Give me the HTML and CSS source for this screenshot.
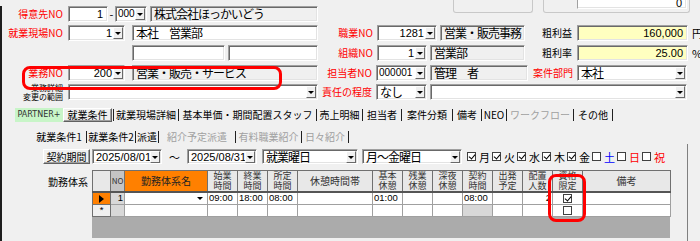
FILE: index.html
```html
<!DOCTYPE html>
<html lang="ja">
<head>
<meta charset="utf-8">
<link rel="stylesheet" href="styles.css">
</head>
<body>
<div class="page">
  <div class="upper">
    <div class="row r1">
      <span class="lbl la red">得意先NO</span>
      <div class="tb w40 ml5 right num">1</div>
      <span class="dash">-</span>
      <div class="cb w32 tight"><span class="v num sm">000</span><span class="dd"></span></div>
      <div class="tb ro w168 ml3">株式会社ほっかいどう</div>
      <div class="grp ga"></div>
      <div class="grp gb"><div class="tb gt right num">0</div></div>
    </div>
    <div class="row r2">
      <span class="lbl la red">就業現場NO</span>
      <div class="cb w57 ml5"><span class="v right num">1</span><span class="dd"></span></div>
      <div class="tb w186 ml7">本社　営業部</div>
      <span class="lbl lb red">職業NO</span>
      <div class="cb w60 ml4"><span class="v right num">1281</span><span class="dd"></span></div>
      <div class="tb ro w85 ml3">営業・販売事務</div>
      <span class="lbl lc">粗利益</span>
      <div class="tb yel w111 ml5 right num">160,000</div>
      <span class="unit">円</span>
    </div>
    <div class="row r3">
      <div class="tb w93 ml132"></div>
      <div class="tb w90 ml3"></div>
      <span class="lbl lb red">組織NO</span>
      <div class="cb w50 ml4"><span class="v right num">1</span><span class="dd"></span></div>
      <div class="tb ro w95 ml3">営業部</div>
      <span class="lbl lc">粗利率</span>
      <div class="tb yel w111 ml5 right num">25.00</div>
      <span class="unit">%</span>
    </div>
    <div class="row r4">
      <span class="lbl la red">業務NO</span>
      <div class="cb w57 ml5"><span class="v right num">200</span><span class="dd"></span></div>
      <div class="tb ro w186 ml7">営業・販売・サービス</div>
      <span class="lbl lb2 red">担当者NO</span>
      <div class="cb w51 ml4 tight"><span class="v num sm">000001</span><span class="dd"></span></div>
      <div class="tb ro w98 ml3">管理　者</div>
      <span class="lbl lc2 red">案件部門</span>
      <div class="cb w110 ml4"><span class="v">本社</span><span class="dd"></span></div>
    </div>
    <div class="row r5">
      <span class="lbl la small">業務詳細<br>変更の範囲</span>
      <div class="cb w250 ml5"><span class="v"></span><span class="dd"></span></div>
      <span class="lbl lb2 red">責任の程度</span>
      <div class="cb w51 ml4"><span class="v">なし</span><span class="dd"></span></div>
      <div class="cb w257 ml3"><span class="v"></span><span class="dd"></span></div>
    </div>
  </div>

  <div class="tabs">
    <span class="partner">PARTNER+</span>
    <span class="tab sel t-a">就業条件</span><span class="sep"></span>
    <span class="tab t-b">就業現場詳細</span><span class="sep"></span>
    <span class="tab t-c">基本単価・期間配置スタッフ</span><span class="sep"></span>
    <span class="tab t-d">売上明細</span><span class="sep"></span>
    <span class="tab t-e">担当者</span><span class="sep"></span>
    <span class="tab t-f">案件分類</span><span class="sep"></span>
    <span class="tab t-g">備考</span><span class="sep"></span>
    <span class="tab t-h">NEO</span><span class="sep"></span>
    <span class="tab t-i dis">ワークフロー</span><span class="sep"></span>
    <span class="tab t-j">その他</span><span class="sep"></span>
  </div>

  <div class="panel">
    <div class="subtabs">
      <span class="tab s-a">就業条件1</span><span class="sep"></span>
      <span class="tab s-b">就業条件2</span><span class="sep"></span>
      <span class="tab s-c">派遣</span><span class="sep"></span>
      <span class="tab s-d dis">紹介予定派遣</span><span class="sep"></span>
      <span class="tab s-e dis">有料職業紹介</span><span class="sep"></span>
      <span class="tab s-f dis">日々紹介</span><span class="sep"></span>
    </div>
    <div class="subpanel">
      <div class="row period">
        <span class="btn">契約期間</span>
        <div class="cb w70 ml2"><span class="v num">2025/08/01</span><span class="dd"></span></div>
        <span class="tilde">～</span>
        <div class="cb w70"><span class="v num">2025/08/31</span><span class="dd"></span></div>
        <div class="cb w96 ml5"><span class="v">就業曜日</span><span class="dd"></span></div>
        <div class="cb w100 ml4"><span class="v">月～金曜日</span><span class="dd"></span></div>
        <div class="days">
          <span class="day"><span class="chk on"></span>月</span>
          <span class="day"><span class="chk on"></span>火</span>
          <span class="day"><span class="chk on"></span>水</span>
          <span class="day"><span class="chk on"></span>木</span>
          <span class="day"><span class="chk on"></span>金</span>
          <span class="day blue"><span class="chk"></span>土</span>
          <span class="day red"><span class="chk"></span>日</span>
          <span class="day red"><span class="chk"></span>祝</span>
        </div>
      </div>
      <div class="gridrow">
        <span class="glabel">勤務体系</span>
        <div class="grid">
          <table>
            <colgroup>
              <col class="c-rh"><col class="c-no"><col class="c-name"><col class="c30"><col class="c30"><col class="c30"><col class="c75"><col class="c30"><col class="c30"><col class="c30"><col class="c30"><col class="c30"><col class="c30"><col class="c30"><col class="c-note">
            </colgroup>
            <thead>
              <tr>
                <th class="rh"></th>
                <th class="hno">NO</th>
                <th class="orange">勤務体系名</th>
                <th>始業<br>時間</th>
                <th>終業<br>時間</th>
                <th>所定<br>時間</th>
                <th class="one">休憩時間帯</th>
                <th>基本<br>休憩</th>
                <th>残業<br>休憩</th>
                <th>深夜<br>休憩</th>
                <th>契約<br>時間</th>
                <th>出発<br>予定</th>
                <th>配置<br>人数</th>
                <th>資格<br>限定</th>
                <th class="one">備考</th>
              </tr>
            </thead>
            <tbody>
              <tr>
                <td class="rh cur"><span class="tri"></span></td>
                <td class="gray right">1</td>
                <td class="namecell"><span class="cellarrow"></span></td>
                <td>09:00</td>
                <td>18:00</td>
                <td>08:00</td>
                <td></td>
                <td>01:00</td>
                <td></td>
                <td></td>
                <td>08:00</td>
                <td></td>
                <td class="right">2</td>
                <td class="center"><span class="gchk on"></span></td>
                <td></td>
              </tr>
              <tr>
                <td class="rh star">*</td>
                <td class="gray"></td>
                <td></td>
                <td></td>
                <td></td>
                <td></td>
                <td></td>
                <td></td>
                <td></td>
                <td></td>
                <td class="gray"></td>
                <td></td>
                <td></td>
                <td class="center"><span class="gchk"></span></td>
                <td></td>
              </tr>
            </tbody>
          </table>
        </div>
      </div>
    </div>
  </div>

  <div class="hl hl1"></div>
  <div class="hl hl2"></div>
</div>
</body>
</html>
```

FILE: styles.css
```css
* { box-sizing: border-box; }
body {
  margin: 0;
  width: 700px;
  height: 241px;
  overflow: hidden;
  background: #f0f0f0;
  font-family: "Noto Sans CJK JP", "Noto Sans CJK SC", sans-serif;
  font-size: 12px;
  color: #000;
}
.page {
  position: relative;
  width: 700px;
  height: 241px;
  border-left: 2px solid #1e1e1e;
  border-bottom: 2px solid #1e1e1e;
}
.upper { margin-left: -2px; }
.row { display: flex; align-items: center; height: 16px; }
.r1 { margin-top: 6px; }
.r2 { margin-top: 3px; }
.r3 { margin-top: 4px; }
.r4 { margin-top: 4px; }
.r5 { margin-top: 3px; }

.lbl { font-size: 10px; line-height: 12px; white-space: nowrap; text-align: right; flex: none; }
.red { color: #ff0000; }
.la { width: 63px; }
.lb { width: 55px; }
.lb2 { width: 54px; }
.lc { width: 47px; }
.lc2 { width: 45px; }
.small { font-size: 8px; line-height: 9px; }

.tb, .cb {
  height: 16px;
  background: #fff;
  border: 1px solid;
  border-color: #a0a0a0 #fff #fff #a0a0a0;
  box-shadow: inset 1px 1px 0 #696969, inset -1px -1px 0 #e3e3e3;
  font-size: 12px;
  line-height: 14px;
  letter-spacing: -1px;
  padding: 0 3px;
  white-space: nowrap;
  overflow: hidden;
  flex: none;
}
.tb.ro { background: #f0f0f0; }
.tb.yel { background: #ffffc0; }
.num { font-family: "Liberation Sans", sans-serif; font-size: 11px; letter-spacing: 0; }
.num.sm { font-size: 10px; }
.tb.num { padding-right: 4px; }
.right { text-align: right; }
.cb { display: flex; align-items: center; padding: 0 1px 0 3px; }
.cb.tight { padding-left: 2px; }
.cb .v { flex: 1; overflow: hidden; white-space: nowrap; }
.cb .v.right { text-align: right; padding-right: 1px; }
.dd {
  flex: none;
  width: 10px;
  height: 12px;
  background: #f0f0f0;
  border: 1px solid;
  border-color: #fff #696969 #696969 #fff;
  position: relative;
}
.dd::after {
  content: "";
  position: absolute;
  left: 1px;
  top: 4px;
  border-left: 3px solid transparent;
  border-right: 3px solid transparent;
  border-top: 3px solid #000;
}
.dash { width: 7px; text-align: center; font-size: 11px; flex: none; }
.unit { font-size: 11px; margin-left: 4px; }

.w32 { width: 32px; } .w40 { width: 40px; } .w50 { width: 50px; } .w51 { width: 51px; }
.w57 { width: 57px; } .w60 { width: 60px; } .w70 { width: 70px; } .w85 { width: 85px; }
.w90 { width: 90px; } .w93 { width: 93px; } .w95 { width: 95px; } .w96 { width: 96px; }
.w98 { width: 98px; } .w100 { width: 100px; } .w110 { width: 110px; } .w111 { width: 111px; }
.w168 { width: 168px; } .w186 { width: 186px; } .w250 { width: 250px; } .w257 { width: 257px; }
.ml2 { margin-left: 2px; } .ml3 { margin-left: 3px; } .ml4 { margin-left: 4px; } .ml5 { margin-left: 5px; }
.ml7 { margin-left: 7px; } .ml132 { margin-left: 132px; }

/* partial group boxes at the top */
.grp {
  align-self: flex-start;
  margin-top: -6px;
  height: 13px;
  border: 1px solid #c8c8c8;
  border-top: none;
  border-radius: 0 0 3px 3px;
  flex: none;
}
.ga { width: 80px; margin-left: 135px; }
.gb { width: 147px; margin-left: 10px; display: flex; justify-content: flex-end; padding-right: 2px; }
.gt { width: 110px; height: 9px; border-top: none; line-height: 6px; padding-right: 6px; box-shadow: inset -1px -1px 0 #e3e3e3; }

/* main tabs */
.tabs { display: flex; align-items: center; height: 14px; margin-top: 8px; margin-left: 13px; font-size: 10px; }
.tab { text-align: center; white-space: nowrap; line-height: 12px; flex: none; }
.sep { width: 1px; height: 12px; background: #202020; flex: none; }
.partner {
  width: 48px; height: 14px; background: #c8f5c8; font-size: 8px; line-height: 14px;
  text-align: center; font-family: "DejaVu Sans", sans-serif; color: #333; flex: none;
}
.sel {
  height: 14px; line-height: 12px;
  border: 1px solid; border-color: #fff #606060 #606060 #fff;
  box-shadow: inset -1px -1px 0 #a0a0a0;
}
.dis { color: #a0a0a0; }
.t-a { width: 49px; margin-right: 1px; }
.t-b { width: 64px; }
.t-c { width: 137px; }
.t-d { width: 45px; }
.t-e { width: 38px; }
.t-f { width: 50px; }
.t-g { width: 28px; }
.t-h { width: 24px; }
.t-i { width: 66px; }
.t-j { width: 38px; }

.panel { margin-left: -2px; }
.subtabs { display: flex; align-items: center; height: 14px; margin-top: 8px; margin-left: 32px; font-size: 10px; }
.s-a { width: 54px; }
.s-b { width: 48px; }
.s-c { width: 22px; }
.s-d { width: 76px; }
.s-e { width: 65px; }
.s-f { width: 46px; }

.subpanel { width: 688px; border-right: 1px solid #808080; padding-top: 5px; height: 100px; }
.period { height: 15px; }
.period .cb { height: 15px; }
.btn {
  margin-left: 43px; width: 47px; height: 15px; font-size: 10px; line-height: 13px; text-align: center; flex: none;
  border: 1px solid; border-color: #fff #606060 #606060 #fff; box-shadow: inset -1px -1px 0 #a0a0a0;
}
.tilde { width: 25px; text-align: center; font-size: 11px; flex: none; }
.days { display: flex; margin-left: 5px; }
.day { display: flex; align-items: center; width: 25px; font-size: 11px; line-height: 12px; }
.day.blue { color: #0000ff; }
.day.red { color: #ff0000; }
.chk {
  width: 9px; height: 9px; background: #fff; border: 1px solid #404040; margin-right: 3px; position: relative; flex: none;
}
.chk.on::after, .gchk.on::after {
  content: ""; position: absolute; left: 2px; top: 0; width: 3px; height: 5px;
  border: solid #000; border-width: 0 1.5px 1.5px 0; transform: rotate(40deg);
}

.gridrow { display: flex; margin-top: 6px; }
.glabel { width: 92px; padding-left: 48px; font-size: 10px; line-height: 12px; padding-top: 6px; flex: none; }
.grid { width: 578px; height: 68px; background: #ababab; flex: none; }
table { border-collapse: collapse; table-layout: fixed; width: 578px; }
.c-rh { width: 18px; } .c-no { width: 14px; } .c-name { width: 83px; } .c30 { width: 30px; } .c75 { width: 75px; } .c-note { width: 88px; }
th {
  height: 21px; padding: 0; font-weight: normal; font-size: 9px; line-height: 10px; color: #333;
  background: #e8e8e8; border: 1px solid #707070; border-bottom: 2px solid #555;
}
th.one { font-size: 10px; }
th.hno { background: #c4c4c4; font-size: 8px; }
th.orange { background: #ff8000; color: #222; font-size: 10px; }
td {
  height: 12px; padding: 0 1px; font-size: 9.5px; line-height: 10px; background: #fff;
  border: 1px solid #a0a0a0; font-family: "Liberation Sans", sans-serif; white-space: nowrap; overflow: hidden;
}
td.gray { background: #d8d8d8; }
td.right { text-align: right; }
td.center { text-align: center; }
td.rh { background: #f0f0f0; text-align: center; border-color: #707070; }
td.cur { background: #ff8000; }
.tri { display: inline-block; border-left: 5px solid #000; border-top: 4px solid transparent; border-bottom: 4px solid transparent; vertical-align: middle; }
.namecell { position: relative; }
.cellarrow { position: absolute; right: 4px; top: 4px; border-left: 3px solid transparent; border-right: 3px solid transparent; border-top: 3px solid #000; }
.gchk { display: inline-block; width: 9px; height: 9px; border: 1px solid #404040; background: #fff; position: relative; vertical-align: middle; }

.hl { position: absolute; border: 3px solid #ff0000; border-radius: 8px; }
.hl1 { left: 20px; top: 60px; width: 260px; height: 24px; }
.hl2 { left: 546px; top: 168px; width: 38px; height: 48px; }
```
